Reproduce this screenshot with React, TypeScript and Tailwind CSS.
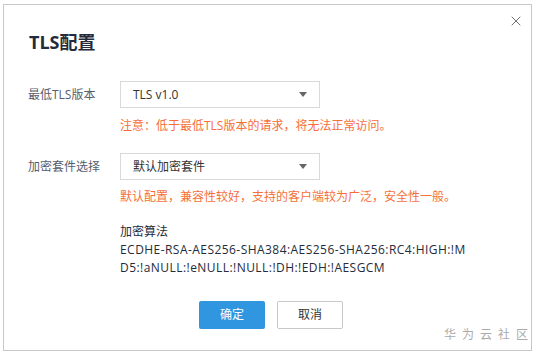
import { X } from "lucide-react";

const font = { fontFamily: '"Open Sans", "Noto Sans CJK SC", sans-serif' };

function Select({ value }: { value: string }) {
  return (
    <div className="flex h-[27px] w-[200px] items-center justify-between border border-[#d9d9d9] bg-white pl-[12px] pr-[12px] text-[12px] text-[#333]">
      <span>{value}</span>
      <span className="h-0 w-0 border-x-[4px] border-t-[5px] border-x-transparent border-t-[#666]" />
    </div>
  );
}

export default function App() {
  return (
    <div className="h-[355px] w-[538px] bg-white pl-[3px] pt-[4px]" style={font}>
      <div className="relative h-[347px] w-[529px] border border-[#c8c8c8] bg-white">
        <button className="absolute right-[7px] top-[8px] text-[#666]">
          <X size={16} strokeWidth={1.4} />
        </button>

        <h1 className="pl-[25px] pt-[24px] text-[18px] font-bold leading-[26px] text-[#252b3a]">TLS配置</h1>

        <div className="mt-[26px] flex items-center pl-[24px]">
          <div className="w-[92px] text-[12px] text-[#575d6c]">最低TLS版本</div>
          <Select value="TLS v1.0" />
        </div>
        <div className="mt-[9px] pl-[116px] text-[12px] leading-[17px] text-[#f66f3a]">
          注意：低于最低TLS版本的请求，将无法正常访问。
        </div>

        <div className="mt-[19px] flex items-center pl-[24px]">
          <div className="w-[92px] text-[12px] text-[#575d6c]">加密套件选择</div>
          <Select value="默认加密套件" />
        </div>
        <div className="mt-[8px] pl-[116px] text-[12px] leading-[17px] text-[#f66f3a]">
          默认配置，兼容性较好，支持的客户端较为广泛，安全性一般。
        </div>

        <div className="mt-[18px] pl-[116px] text-[12px] leading-[18px] text-[#252b3a]">
          <div>加密算法</div>
          <div className="w-[348px] break-all tracking-[0.45px]">
            ECDHE-RSA-AES256-SHA384:AES256-SHA256:RC4:HIGH:!MD5:!aNULL:!eNULL:!NULL:!DH:!EDH:!AESGCM
          </div>
        </div>

        <div className="mt-[24px] flex justify-center gap-[12px] pl-[7px]">
          <button className="h-[28px] w-[66px] rounded-[2px] bg-[#3096e0] text-[12px] text-white">确定</button>
          <button className="h-[28px] w-[66px] rounded-[2px] border border-[#c8c8c8] bg-white text-[12px] text-[#333]">取消</button>
        </div>

        <div className="absolute bottom-[6px] right-[-3px] text-[12px] tracking-[6px] text-[#aaa]">华为云社区</div>
      </div>
    </div>
  );
}
